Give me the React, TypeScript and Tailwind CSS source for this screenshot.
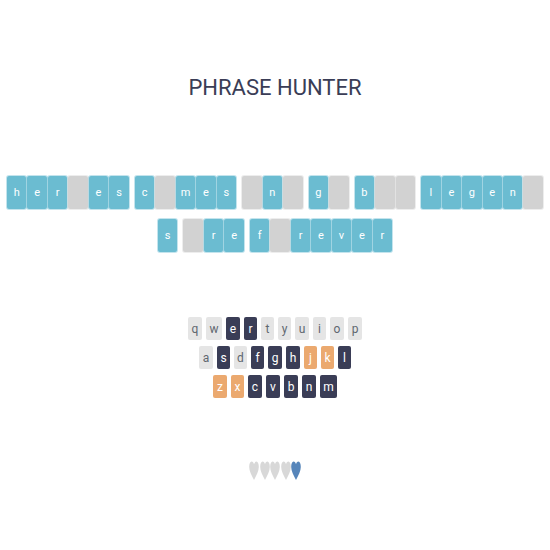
const LINES = [
  ['her_es', 'c_mes', '_n_', 'g_', 'b__', 'legen_'],
  ['s', '_re', 'f_rever'],
];

const KEY_ROWS = ['qwertyuiop', 'asdfghjkl', 'zxcvbnm'];
const CORRECT = 'ersfghlcvbnm';
const MISSED = 'jkzx';

function keyColor(letter: string) {
  if (CORRECT.includes(letter)) return 'bg-[#3a3d56] text-white';
  if (MISSED.includes(letter)) return 'bg-[#eba96f] text-white';
  return 'bg-[#e5e5e5] text-[#5f6770]';
}

function keyWidth(letter: string) {
  if (letter === 'm') return 'w-[17px]';
  if (letter === 'w') return 'w-4';
  if ('rtyifjlsdkx'.includes(letter)) return 'w-[13px]';
  return 'w-[14px]';
}

function Phrase({ words, inset }: { words: string[]; inset: boolean }) {
  return (
    <div className="flex w-full">
      {inset && <span className="grow-59 basis-0" />}
      {words.map((word, w) => (
        <div key={w} className="contents">
          {w > 0 && <span className="grow-2 basis-0" />}
          {word.split('').map((letter, i) => (
            <div key={i} className="h-[33px] min-w-0 grow-8 basis-0">
              <div
                className={`mr-px flex h-full items-center justify-center rounded-[2px] text-[11px] leading-4 text-white ${
                  letter === '_'
                    ? 'bg-[#d2d2d2] shadow-[0_0_0_1px_#d2d2d266]'
                    : 'bg-[#6bbcd1] shadow-[0_0_0_1px_#6bbcd166]'
                }`}
              >
                {letter === '_' ? '' : letter}
              </div>
            </div>
          ))}
        </div>
      ))}
      {inset && <span className="grow-59 basis-0" />}
    </div>
  );
}

function Heart({ lit }: { lit: boolean }) {
  return (
    <svg viewBox="0 0 10 20" className={`h-5 w-[10px] ${lit ? 'text-[#5685ba]' : 'text-[#d8d8d8]'}`} aria-hidden="true">
      <path
        fill="currentColor"
        d="M5 3.200C4.500 1.800 3.800.6 2.600.6 1 1 .2 3 .2 6c0 4.200 2.300 8 4.800 13C7.500 14 9.800 10.200 9.800 6 9.800 3 9 1 7.400.6 6.200.6 5.500 1.800 5 3.200Z"
      />
    </svg>
  );
}

export default function App() {
  return (
    <main className="flex min-h-screen flex-col items-center bg-white pt-[68px] font-['Roboto','Noto_Sans',sans-serif]">
      <h1 className="text-[22px] leading-10 font-normal whitespace-nowrap text-[#3a3d56]">
        PHRASE HUNTER
      </h1>
      <section aria-label="Phrase" className="mt-[68px] flex w-full flex-col gap-[10px] pr-[6px] pl-[7px]">
        {LINES.map((words, i) => (
          <Phrase key={i} words={words} inset={i > 0} />
        ))}
      </section>
      <section aria-label="Keyboard" className="mt-[65px] flex flex-col items-center gap-[6px]">
        {KEY_ROWS.map((row) => (
          <div key={row} className="flex gap-1">
            {row.split('').map((letter) => (
              <button
                key={letter}
                type="button"
                className={`flex h-[23px] items-center justify-center rounded-[2px] text-xs leading-4 ${keyWidth(letter)} ${keyColor(letter)}`}
              >
                {letter}
              </button>
            ))}
          </div>
        ))}
      </section>
      <div role="img" aria-label="1 life left" className="mt-[63px] flex w-[52px] justify-between">
        {[0, 1, 2, 3, 4].map((n) => (
          <Heart key={n} lit={n === 4} />
        ))}
      </div>
    </main>
  );
}
